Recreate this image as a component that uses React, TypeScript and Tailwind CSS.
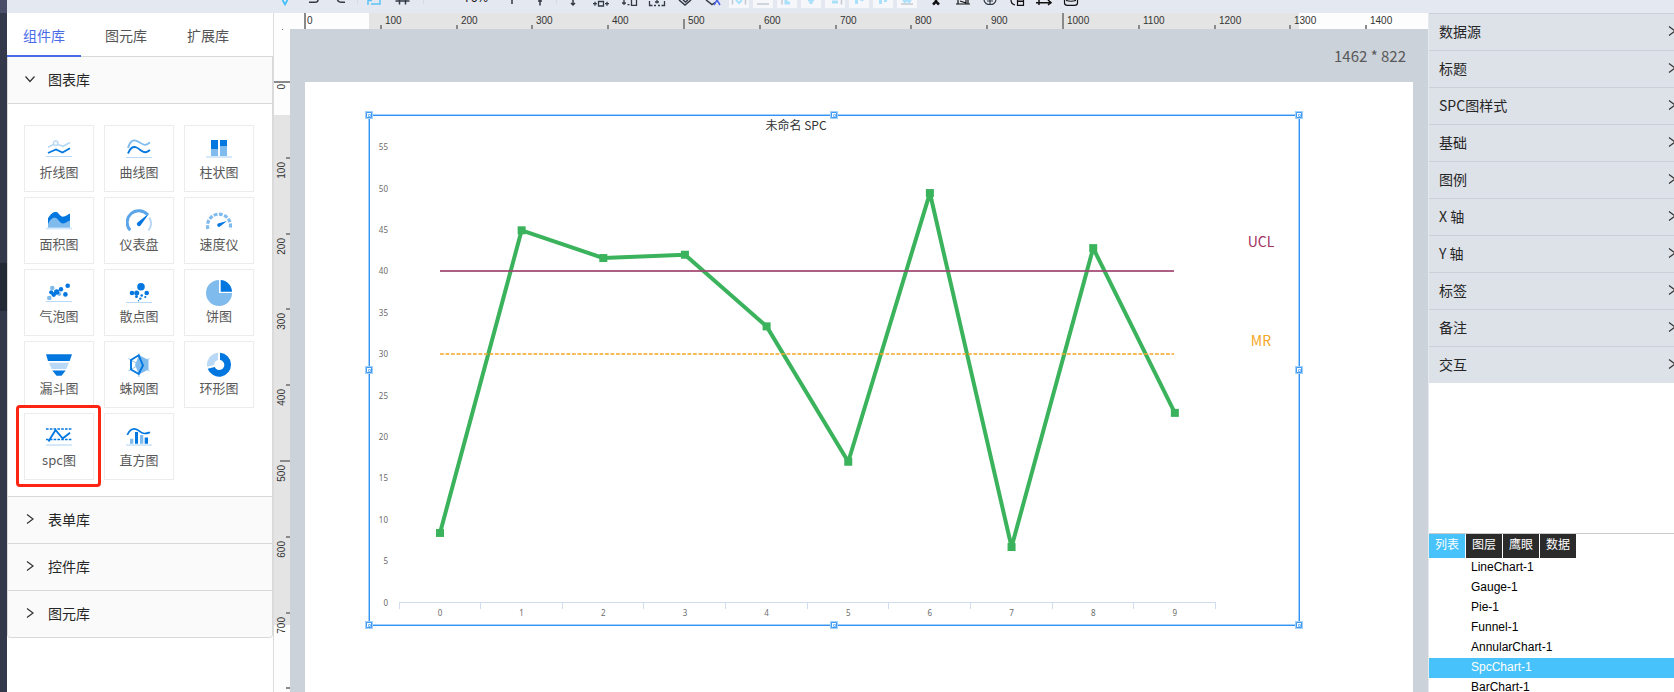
import type { ReactNode } from "react";

const DARK = "#0277e0";
const LIGHT = "#80bbee";
const PALE = "#b9d9f6";
const FAINT = "#d6e9fa";

/* ---------- top toolbar ---------- */

function Tool({ label, className, children }: { label: string; className?: string; children: ReactNode }) {
  return (
    <button type="button" aria-label={label} className={`flex shrink-0 justify-center ${className ?? "w-7"}`}>
      <svg width="20" height="13" viewBox="0 0 20 13" fill="none" stroke="#333a45" strokeWidth="1.5">
        {children}
      </svg>
    </button>
  );
}

function Divider({ className }: { className: string }) {
  return (
    <span className={`flex shrink-0 justify-center ${className}`}>
      <span className="h-1 w-px bg-[#d5dae3]" />
    </span>
  );
}

const alignTools: { label: string; drawing: ReactNode }[] = [
  { label: "水平分布", drawing: <><path d="M3.500 0v4.500M16.500 0v4.500" stroke="#c3c9d1" /><path d="M7 0l3 3 3-3" stroke="#a9e0fb" strokeWidth="2" /></> },
  { label: "底部对齐", drawing: <path d="M4 4h12" stroke="#c3c9d1" /> },
  { label: "左对齐", drawing: <><path d="M5 0v4.500" stroke="#c3c9d1" /><path d="M9 0v3h4" stroke="#a9e0fb" strokeWidth="3" /></> },
  { label: "垂直居中", drawing: <path d="M7 0h6M10 0v4" stroke="#a9e0fb" strokeWidth="3" /> },
  { label: "右对齐", drawing: <><path d="M16.500 0v4.500" stroke="#c3c9d1" /><path d="M7 2h6" stroke="#a9e0fb" strokeWidth="3" /></> },
  { label: "顶部对齐", drawing: <path d="M7.500 0v4M13 0v1" stroke="#a9e0fb" strokeWidth="3" /> },
  { label: "等高", drawing: <path d="M7.500 0v4M12.500 0v2" stroke="#a9e0fb" strokeWidth="3" /> },
  { label: "等宽", drawing: <><path d="M4 4h12" stroke="#c3c9d1" /><path d="M6 0l2 2 2-2 2 2 2-2" stroke="#a9e0fb" strokeWidth="2" /></> },
];

function Toolbar() {
  return (
    <header className="flex h-[13px] shrink-0 items-start overflow-hidden bg-[#e3e8f1] pl-[264px]">
      <Tool label="选择"><path d="M7.500 0L10 4.500 12.500 0" stroke="#46c0f8" strokeWidth="1.800" /></Tool>
      <Tool label="撤销"><path d="M6 2.300h6q3 0 3-2.300" /></Tool>
      <Tool label="重做"><path d="M14 2.300h-3.500q-3 0-4-2.300" /></Tool>
      <Divider className="mr-px w-1" />
      <Tool label="框选"><path d="M4 0v5M4 .5h4M7 4h9V0" stroke="#5bc2f5" /></Tool>
      <Tool label="网格"><path d="M3.500 1h14M7.500 0v4.500M13.500 0v4.500" /></Tool>
      <Divider className="w-3.5" />
      <span className="flex h-[3px] w-[68px] shrink-0 items-end overflow-hidden pl-[34px] font-['Liberation_Sans'] text-[12px] leading-[10px] text-[#111]">76%</span>
      <Tool label="缩放"><path d="M10 0v4" /></Tool>
      <Tool label="上移"><path d="M10 0v5.500M8 1h4" /></Tool>
      <Divider className="w-[5px]" />
      <Tool label="下移"><path d="M10 0v5M8 3l2 2 2-2" /></Tool>
      <Tool label="水平间距"><path d="M7.500 1.500h5v4.500h-5zM2 3.700h4M4 1.700v4M14 3.700h4M16 1.700v4" strokeWidth="1.300" /></Tool>
      <Tool label="垂直间距"><path d="M12.500 0v5.300h5V0M5 0v5M3 3h4M8.500 4.700h2" strokeWidth="1.300" /></Tool>
      <Tool label="组合"><path d="M2.500 1v4.500h3M7 5.500h2M11 5.500h2M17.500 1v4.500h-3M10 0v3.500M8 2h4" strokeWidth="1.300" /></Tool>
      <Tool label="格式刷"><path d="M4 0l6 5 6-5M8 0l2.500 2L13 0" /></Tool>
      <Tool label="文本样式"><path d="M3 0l6 4.500 3-2" /><path d="M11 5l3-5 3 5" stroke="#4a62e0" /></Tool>
      <div className="ml-0.5 flex shrink-0 gap-1">
        {alignTools.map((t) => (
          <button key={t.label} type="button" aria-label={t.label} className="h-2 w-5 bg-[#f5f7fb]">
            <svg width="20" height="8" viewBox="0 0 20 8" fill="none" strokeWidth="1.500">{t.drawing}</svg>
          </button>
        ))}
      </div>
      <Tool label="标记" className="ml-[5px] w-[27px]"><path d="M10 0v3M7 4.500l3-3 3 3" stroke="#111" strokeWidth="2.500" /></Tool>
      <Tool label="图片" className="w-[27px]"><path d="M3 4h14M5 0v4M15 0v4M7 1l6 2V0" stroke="#111" strokeWidth="1.200" /></Tool>
      <Tool label="定位" className="w-[27px]"><path d="M4 0q1 4.500 6 4.500T16 0M10 0v5M7 1h6" strokeWidth="1.200" /></Tool>
      <Tool label="复制" className="w-[27px]"><path d="M4 0q0 4 4 5M10.500 0v5.300h6V0zM10 1.500h6" stroke="#111" strokeWidth="1.200" /></Tool>
      <Tool label="连线" className="w-[27px]"><path d="M2 2.700h15M5 0v5M14 0l3 2.700L14 5" stroke="#111" /></Tool>
      <Tool label="数据库" className="w-[27px]"><path d="M3.500 0v3q0 2.300 3 2.300h7q3 0 3-2.300V0M5 .5q5 1.500 10 0" stroke="#111" strokeWidth="1.200" /></Tool>
    </header>
  );
}

/* ---------- left component library ---------- */

const charts: { name: string; icon: ReactNode }[] = [
  {
    name: "折线图",
    icon: (
      <>
        <path d="M0 20.500h26" stroke={PALE} />
        <path d="M2 11.200l5.500-2.700M12 8.500l5 1.800 7-3.800" stroke={PALE} strokeWidth="1.600" />
        <circle cx="9.700" cy="7.200" r="2.200" stroke={PALE} strokeWidth="1.500" />
        <path d="M2 17l8-3.500 6.500 3L24 12.300" stroke={DARK} strokeWidth="1.700" />
      </>
    ),
  },
  {
    name: "曲线图",
    icon: (
      <>
        <path d="M0 21.500h26" stroke={PALE} />
        <path d="M2 12C4 5 7 3.500 10.500 4.800S16 9 19 8.800 22.500 7.200 24 6.500" stroke={LIGHT} strokeWidth="1.800" />
        <path d="M2 17.500c2-5.500 5-7.500 8.500-6S16 16.300 19 16.200s3.500-1.400 5-2.200" stroke={DARK} strokeWidth="1.900" />
      </>
    ),
  },
  {
    name: "柱状图",
    icon: (
      <>
        <path d="M0 20h26v2H0z" fill={FAINT} />
        <path d="M5 13h7v7H5zM14 10h7v10h-7z" fill={LIGHT} />
        <path d="M5 4h7v9H5zM14 4h7v6h-7z" fill={DARK} />
      </>
    ),
  },
  {
    name: "面积图",
    icon: (
      <>
        <path d="M0 19.500h26v2H0z" fill={FAINT} />
        <path d="M2 19.300v-9C5 5 8 3.500 10.500 4S14 9.500 18 8.500c2-.5 4-2 6-3v13.800z" fill={DARK} />
        <path d="M2 19.300V16C5 10 7.500 9 10 10s4 6 7.500 5.500c2-.5 4-2 6.500-3v6.800z" fill={LIGHT} />
      </>
    ),
  },
  {
    name: "仪表盘",
    icon: (
      <>
        <path d="M4.200 22.300A11.300 11.300 0 0 1 21.500 6.500" stroke="#5ba5ea" strokeWidth="3" />
        <path d="M23.200 9.500a11.500 11.500 0 0 1-.8 13" stroke={PALE} strokeWidth="2" />
        <path d="M11.500 14.500L23.500 5 14.500 17.500a2 2 0 1 1-3-3z" fill={DARK} />
      </>
    ),
  },
  {
    name: "速度仪",
    icon: (
      <>
        <path d="M2 21A11.500 11.500 0 1 1 24 21" stroke={LIGHT} strokeWidth="3.200" strokeDasharray="3.800 1.500" />
        <path d="M12 15.500l9-2.500-7 5.500a1.700 1.700 0 1 1-2-3z" fill={DARK} />
      </>
    ),
  },
  {
    name: "气泡图",
    icon: (
      <>
        <path d="M0 21.500h26" stroke={PALE} />
        <g fill={LIGHT}>
          <circle cx="6.300" cy="8" r="2.300" /><circle cx="3.300" cy="18" r="2.300" /><circle cx="13.300" cy="14" r="2" />
        </g>
        <g fill={DARK}>
          <circle cx="5.200" cy="12.300" r="2.100" /><circle cx="7.700" cy="14.600" r="2.300" /><circle cx="10.700" cy="12" r="2.700" />
          <circle cx="15" cy="9.300" r="2.200" /><circle cx="21.700" cy="5.800" r="2.300" /><circle cx="19.400" cy="14.400" r="2.300" />
        </g>
      </>
    ),
  },
  {
    name: "散点图",
    icon: (
      <>
        <path d="M0 22.500h26" stroke={PALE} />
        <g fill={DARK}>
          <circle cx="15" cy="6.800" r="3.800" /><circle cx="6" cy="13" r="2.300" /><circle cx="10.700" cy="13" r="2.500" />
          <circle cx="20.700" cy="13" r="2.300" /><circle cx="10.500" cy="16.500" r="1.500" /><circle cx="15.700" cy="15.500" r="1.300" />
          <circle cx="19.300" cy="17" r="1.100" /><circle cx="14.300" cy="18.600" r="1.200" /><circle cx="12.500" cy="20.700" r=".7" />
        </g>
      </>
    ),
  },
  {
    name: "饼图",
    icon: (
      <>
        <path d="M13 0a13 13 0 1 0 13 13H13z" fill={LIGHT} />
        <path d="M14.700 0A12 12 0 0 1 26 11.800H14.700z" fill={DARK} />
      </>
    ),
  },
  {
    name: "漏斗图",
    icon: (
      <>
        <path d="M0 2.300h26L23.700 9H2z" fill={DARK} />
        <path d="M3 10.700h20L20.300 17H5.700z" fill={PALE} />
        <path d="M6.300 18.500h13.400L15.500 23.800h-5z" fill={DARK} />
      </>
    ),
  },
  {
    name: "蛛网图",
    icon: (
      <>
        <path d="M13 1v24M2.500 6.500l21 12.500M2.500 19l21-12.500" stroke={LIGHT} strokeWidth=".900" />
        <path d="M13 3l9.500 5v9.500L13 22.500 9 13z" fill={LIGHT} />
        <path d="M12.700 3.300L5 8v9.500l7.700 4.500L17 13.500z" stroke={DARK} strokeWidth="1.900" />
      </>
    ),
  },
  {
    name: "环形图",
    icon: (
      <>
        <path d="M14 .7a12 12 0 1 1-12.300 16l7-1.800A5 5 0 1 0 14 8z" fill={DARK} />
        <path d="M12 .7V8a5.200 5.200 0 0 0-3.800 5L1.200 14.700A12 12 0 0 1 12 .7z" fill={PALE} />
      </>
    ),
  },
  {
    name: "spc图",
    icon: (
      <>
        <path d="M0 20h26v2H0z" fill={FAINT} />
        <path d="M0 5h26M0 15.500h26" stroke={DARK} strokeWidth="1.300" strokeDasharray="2.600 1.200" />
        <path d="M2.500 17.500L9.500 6l7.200 8.500L24 8.800" stroke={DARK} strokeWidth="1.900" />
      </>
    ),
  },
  {
    name: "直方图",
    icon: (
      <>
        <path d="M0 20h26v2H0z" fill={FAINT} />
        <path d="M4 14.700h3.300v5H4zM14 11h3.300v8.700H14z" fill={LIGHT} />
        <path d="M9 8h3v11.700H9zM18.700 13.500H22v6.200h-3.300z" fill={DARK} />
        <path d="M1.300 10.800C3.500 6.500 6.500 4 10 5.200S15 9.500 18.500 9.500s4-.8 5.500-1.300" stroke={DARK} strokeWidth="1.700" />
      </>
    ),
  },
];

function Chevron({ down = false }: { down?: boolean }) {
  return (
    <svg width="12" height="12" viewBox="0 0 12 12" fill="none" stroke="#333" strokeWidth="1.200" className="shrink-0">
      <path d={down ? "M1.500 3.500L6 8.500l4.500-5" : "M3 1.500L9 6l-6 4.500"} />
    </svg>
  );
}

function SectionHeader({ title, open = false }: { title: string; open?: boolean }) {
  return (
    <button type="button" aria-expanded={open} className="box-content flex h-11 w-full items-center gap-3 bg-[#fafafa] pb-0.5 text-sm text-[#262626]">
      <span className="flex w-7 justify-end"><Chevron down={open} /></span>
      {title}
    </button>
  );
}

function Library() {
  return (
    <aside className="w-[266px] shrink-0 overflow-hidden bg-white">
      <nav className="flex h-11 border-b border-[#d9d9d9] text-sm">
        <button type="button" className="h-11 w-[74px] border-b-2 border-[#4a6be8] pt-px text-center text-[#4a6be8]">组件库</button>
        <button type="button" className="w-[90px] text-center text-[#555]">图元库</button>
        <button type="button" className="w-[74px] text-center text-[#555]">扩展库</button>
      </nav>
      <div className="divide-y divide-[#d9d9d9] overflow-hidden rounded-b border-x border-b border-[#d9d9d9]">
        <section className="divide-y divide-[#d9d9d9]">
          <SectionHeader title="图表库" open />
          <div className="grid grid-cols-[repeat(3,70px)] gap-x-2.5 gap-y-[5px] px-4 pt-[21px] pb-4">
            {charts.map((c) => (
              <button key={c.name} type="button" className="relative flex h-[67px] flex-col items-center border border-[#ececec] bg-white pt-2.5 text-[13px] leading-5 text-[#595959]">
                <svg width="26" height="26" viewBox="0 0 26 26" fill="none">{c.icon}</svg>
                {c.name}
                {c.name === "spc图" && <span className="absolute -top-[9px] -right-2 -bottom-2 -left-[9px] rounded border-3 border-[#fe2414]" />}
              </button>
            ))}
          </div>
        </section>
        <SectionHeader title="表单库" />
        <SectionHeader title="控件库" />
        <SectionHeader title="图元库" />
      </div>
    </aside>
  );
}

/* ---------- rulers ---------- */

const STEP = 75.8;
const marks = Array.from({ length: 15 }, (_, i) => i);
const tickLength = (i: number) => (i % 10 === 0 ? 16 : i % 5 === 0 ? 10 : 4);

function HorizontalRuler() {
  return (
    <svg className="block h-4 w-full shrink-0 bg-[#fdfdfd]" aria-hidden="true">
      <rect x="79" width="930" height="16" fill="#e4e4e4" />
      {marks.map((i) => {
        const x = Math.round(15 + i * STEP);
        const len = tickLength(i);
        return (
          <g key={i}>
            <rect x={x - 1} y={16 - len} width="2" height={len} fill="#8a8a8a" />
            <text x={x + (i ? 4 : 2)} y="11" fill="#333" className="font-['Liberation_Sans',sans-serif] text-[10px]">{i * 100}</text>
          </g>
        );
      })}
    </svg>
  );
}

function VerticalRuler() {
  return (
    <div className="flex w-[17px] shrink-0 flex-col border-l border-[#dcdcdc] bg-[#fdfdfd] pt-4">
      <svg className="block w-full flex-1" aria-hidden="true">
        <rect y="86" width="16" height="510" fill="#e4e4e4" />
        <rect x="8" y="0" width="1" height="1" fill="#777" />
        {marks.slice(0, 9).map((i) => {
          const y = Math.round(53 + i * STEP);
          const len = tickLength(i);
          return (
            <g key={i}>
              <rect x={16 - len} y={y - 1} width={len} height="2" fill="#8a8a8a" />
              {i < 8 && (
                <text textAnchor="end" transform={`translate(11 ${y + (i ? 4 : 2)}) rotate(-90)`} fill="#333" className="font-['Liberation_Sans',sans-serif] text-[10px]">{i * 100}</text>
              )}
            </g>
          );
        })}
      </svg>
    </div>
  );
}

/* ---------- SPC chart ---------- */

const values = [8.4, 44.95, 41.6, 42, 33.35, 17, 49.45, 6.7, 42.8, 22.9];
const px = (i: number) => 71 + i * 81.65;
const py = (v: number) => 487.5 - v * 8.28;
const handles = [[0, 0], [465, 0], [930, 0], [0, 255], [930, 255], [0, 510], [465, 510], [930, 510]];

function SpcChart() {
  return (
    <svg width="930" height="510" viewBox="0 0 930 510" fill="none" className="absolute top-[33px] left-16 overflow-visible" role="img" aria-label="未命名 SPC">
      <text x="427" y="15" textAnchor="middle" fill="#333" className="text-[12px]">未命名 SPC</text>
      <g fill="#6b6b6b" textAnchor="end" className="font-['Noto_Sans',sans-serif] text-[8px]">
        {Array.from({ length: 12 }, (_, i) => (
          <text key={i} x="19" y={Math.round(py(i * 5)) + 3}>{i * 5}</text>
        ))}
      </g>
      <g stroke="#d3dcef">
        <path d="M30 487.500h817" />
        {Array.from({ length: 11 }, (_, i) => (
          <path key={i} d={`M${Math.floor(30 + i * 81.65)}.5 487v7`} />
        ))}
      </g>
      <g fill="#6b6b6b" textAnchor="middle" className="font-['Noto_Sans',sans-serif] text-[8px]">
        {values.map((_, i) => (
          <text key={i} x={px(i)} y="501">{i}</text>
        ))}
      </g>
      <polyline points={values.map((v, i) => `${px(i)},${py(v)}`).join(" ")} stroke="#3bb35c" strokeWidth="4" strokeLinejoin="bevel" />
      {values.map((v, i) => (
        <rect key={i} x={px(i) - 4} y={py(v) - 4} width="8" height="8" fill="#3bb35c" />
      ))}
      <path d="M71 156h734" stroke="#a0436f" strokeWidth="2" strokeOpacity=".85" />
      <path d="M71 239h734" stroke="#f5a623" strokeWidth="1.500" strokeDasharray="3.800 1.700" />
      <text x="892" y="132" textAnchor="middle" fill="#a1305f" className="text-[14px]">UCL</text>
      <text x="892" y="231" textAnchor="middle" fill="#f5a623" className="text-[14px]">MR</text>
      <rect x="-.5" y="-.5" width="930" height="510" stroke="#a3d0fb" />
      <rect x=".5" y=".5" width="930" height="510" stroke="#3492f4" />
      {handles.map(([x, y]) => (
        <g key={`${x}-${y}`} transform={`translate(${x} ${y})`}>
          <rect x="-4" y="-4" width="8" height="8" fill="#a3d0fb" />
          <path d="M-2.500-2.500h5v5h-5z" fill="#fff" stroke="#3f9af6" />
          <path d="M-.5-.5h2v2h-2z" stroke="#7dbcf9" />
        </g>
      ))}
    </svg>
  );
}

/* ---------- right property panel ---------- */

const properties = ["数据源", "标题", "SPC图样式", "基础", "图例", "X 轴", "Y 轴", "标签", "备注", "交互"];
const panelTabs = ["列表", "图层", "鹰眼", "数据"];
const layers = ["LineChart-1", "Gauge-1", "Pie-1", "Funnel-1", "AnnularChart-1", "SpcChart-1", "BarChart-1"];

function PropertyPanel() {
  return (
    <aside className="flex w-[246px] shrink-0 flex-col overflow-hidden border-l border-[#e6e9ed] bg-white">
      <div className="flex-1">
        {properties.map((p) => (
          <button key={p} type="button" className="flex h-[37px] w-[249px] items-center justify-between border-t border-[#c9d0da] bg-[#dde1e8] pb-0.5 pl-2.5 text-sm text-[#262626]">
            {p}
            <Chevron />
          </button>
        ))}
      </div>
      <div className="h-[159px] shrink-0 overflow-hidden border-t border-[#ccc]">
        <div className="flex gap-px">
          {panelTabs.map((t) => (
            <button key={t} type="button" className={`h-6 w-9 pb-1 text-xs text-white ${t === "列表" ? "bg-[#47c2fb]" : "bg-[#2b2b2b]"}`}>{t}</button>
          ))}
        </div>
        <ul className="font-['Liberation_Sans',sans-serif] text-xs leading-[18px]">
          {layers.map((l) => (
            <li key={l} className={`h-5 pl-[42px] ${l === "SpcChart-1" ? "bg-[#47c2fb] text-white" : "text-black"}`}>{l}</li>
          ))}
        </ul>
      </div>
    </aside>
  );
}

export default function App() {
  return (
    <div className="flex h-screen overflow-hidden bg-white font-['Noto_Sans_CJK_SC',sans-serif]">
      <div className="flex w-[7px] shrink-0 flex-col bg-[#33384a]">
        <span className="h-[13px] bg-[#4a4e69]" />
        <span className="mt-[250px] h-12 bg-[#222834]" />
      </div>
      <div className="flex min-w-0 flex-1 flex-col">
        <Toolbar />
        <div className="flex min-h-0 flex-1">
          <Library />
          <VerticalRuler />
          <main className="flex min-w-0 flex-1 flex-col overflow-hidden bg-[#cbd2d9]">
            <HorizontalRuler />
            <div className="flex h-[53px] shrink-0 items-center justify-end pr-[22px] pt-1.5 pb-1 text-[15px] text-[#595959]">1462 * 822</div>
            <div className="relative mr-[15px] ml-[15px] flex-1 bg-white">
              <SpcChart />
            </div>
          </main>
          <PropertyPanel />
        </div>
      </div>
    </div>
  );
}
